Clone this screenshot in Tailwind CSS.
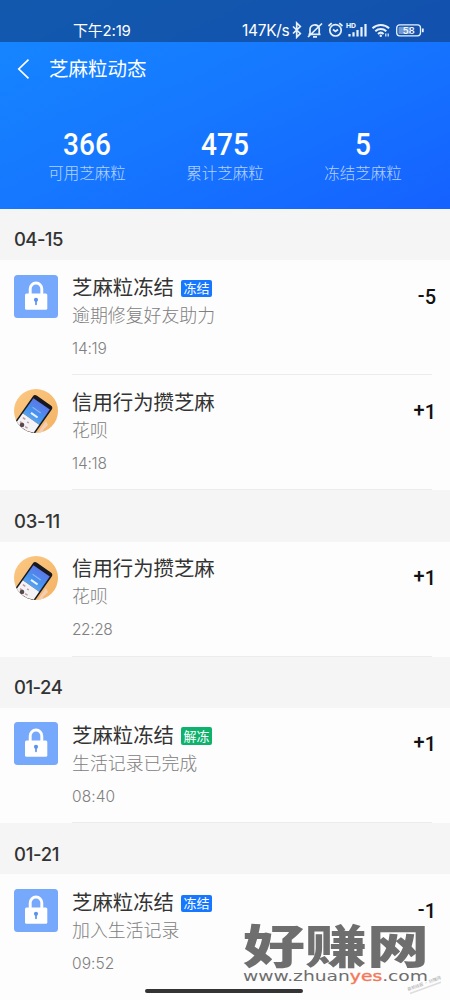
<!DOCTYPE html>
<html lang="zh-CN">
<head>
  <meta charset="UTF-8">
  <meta name="viewport" content="width=device-width, initial-scale=1">
  <title>芝麻粒动态</title>
  <script src="https://cdn.jsdelivr.net/npm/@tailwindcss/browser@4"></script>
</head>
<body class="bg-[#fdfdfd]">

  <!-- shared icons -->
  <svg class="absolute size-0">
    <symbol id="lock" viewBox="0 0 44 43">
      <rect width="44" height="43" rx="3.5" fill="#76a9fb"/>
      <path d="M16.2 20v-6.2a5.8 5.8 0 0 1 11.6 0V20" fill="none" stroke="#fff" stroke-width="2.9"/>
      <rect x="11" y="18.5" width="22.3" height="16.3" rx="1.5" fill="#fff"/>
      <circle cx="22" cy="24.8" r="2.1" fill="#5b93ee"/>
      <path d="M22 25v4.3" stroke="#5b93ee" stroke-width="1.7" stroke-linecap="round"/>
    </symbol>
    <linearGradient id="screen" x1="0" y1="0" x2="0" y2="1">
      <stop offset="0" stop-color="#5c78e8"/>
      <stop offset=".6" stop-color="#4792ee"/>
      <stop offset="1" stop-color="#5aa3f0"/>
    </linearGradient>
    <linearGradient id="peach" x1="0" y1="0" x2="1" y2="1">
      <stop offset="0" stop-color="#fbc884"/>
      <stop offset="1" stop-color="#f3b364"/>
    </linearGradient>
    <clipPath id="round"><circle cx="22" cy="22" r="22"/></clipPath>
    <symbol id="phone" viewBox="0 0 44 44">
      <g clip-path="url(#round)">
        <rect width="44" height="44" fill="url(#peach)"/>
        <path d="M32 32l-5 7-4 6h7l-1-4 5-5z" fill="#f3cdb5"/>
        <g transform="translate(20.5 5) rotate(35)">
          <rect width="23" height="44" rx="3" fill="#17191f"/>
          <rect x="1.5" y="4" width="20" height="18.500" fill="url(#screen)"/>
          <rect x="1.5" y="22.500" width="20" height="15" fill="#f4f3f6"/>
          <path d="M6 12h10" stroke="#8eb4fa" stroke-width="1"/>
          <path d="M8 17.500h8" stroke="#eaf4ff" stroke-width="2"/>
          <path d="M4 26h3M10 27h2M4 31h4M11 32h3" stroke="#c49aa0" stroke-width="1.5"/>
        </g>
        <circle cx="8" cy="36" r="2.3" fill="#55494e"/>
        <path d="M9 40l4 3 6 1" stroke="#5d4a48" stroke-width="1.5" fill="none"/>
      </g>
    </symbol>
  </svg>

  <main class="relative flex h-[1000px] w-[450px] flex-col overflow-hidden font-['Inter','Noto_Sans_CJK_SC',sans-serif] text-[#333]">

    <!-- header -->
    <header class="h-[209px] shrink-0 bg-linear-to-br from-[#1688ff] via-[#1677ff] to-[#1661ff] text-white">
      <div class="flex h-[42px] items-end justify-between bg-[#103a78]/60 pr-[25px] pb-[3px] pl-[73px]">
        <span class="text-[15px] leading-[16px] tracking-[-0.2px]">下午2:19</span>
        <div class="flex h-[18px] items-center">
          <span class="mt-[2px] w-[49px] text-[15.5px] leading-[18px] tracking-[-0.3px] whitespace-nowrap">147K/s</span>
          <svg class="h-[18px] w-[134px]" viewBox="0 0 134 18" fill="none" stroke="#e8f2ff" stroke-width="1.7">
            <!-- bluetooth -->
            <path d="M2 5.500l7.300 7-3.600 3.700V2l3.600 3.500-7.300 7"/>
            <!-- muted bell -->
            <path d="M17.500 13.300h12M19 13V8.500a4.700 4.700 0 0 1 9.200-1.200V13M22 15.900h4M17 16L31 2.500"/>
            <!-- alarm -->
            <circle cx="44.500" cy="9.300" r="5.700"/>
            <path d="M42 8.500l2.500 2 2.500-2M37.500 5l3.200-2.900M51.500 5l-3.200-2.900"/>
            <!-- signal -->
            <path d="M58.500 13v2.500M62.500 11.300v4.200M66.500 9v6.500M70.500 6v9.500M74.500 3v12.500" stroke-width="2.2"/>
            <text x="55" y="7" font-size="6.800" font-weight="800" fill="#e8f2ff" stroke="none">HD</text>
            <!-- wifi -->
            <path d="M81.500 7.300a12 12 0 0 1 16.600 0M84.300 10.200a8 8 0 0 1 11 0M87 12.900a4.200 4.200 0 0 1 5.600 0" stroke-width="2"/>
            <circle cx="89.800" cy="14.700" r="1.200" fill="#e8f2ff" stroke="none"/>
            <path d="M94.800 12.500v3M97.200 12.500v3" stroke-width="1.200"/>
            <!-- battery -->
            <rect x="105.700" y="3.900" width="23.800" height="10.900" rx="3" stroke-width="1.300"/>
            <rect x="107.500" y="5.800" width="12" height="7.200" rx="1" fill="#6f98d2" stroke="none"/>
            <path d="M131.800 7.500v3.700" stroke-width="1.800"/>
            <text x="111.800" y="12.700" font-size="9.300" font-weight="600" fill="#f4f8ff" stroke="none">58</text>
          </svg>
        </div>
      </div>

      <div class="flex h-[54px] items-center pl-[17px]">
        <svg class="h-[22px] w-[32px]" viewBox="0 0 32 22" fill="none" stroke="#fff" stroke-width="1.7">
          <path d="M11.500 1.700L1.800 11l9.700 9.300"/>
        </svg>
        <h1 class="text-[19.5px] leading-[22px]">芝麻粒动态</h1>
      </div>

      <div class="grid grid-cols-3 px-[18px] pt-[32px] text-center">
        <div>
          <div class="scale-x-92 font-['Roboto'] text-[30.5px] leading-[33px] font-medium">366</div>
          <div class="text-[15.5px] leading-[26px] font-light text-white/70">可用芝麻粒</div>
        </div>
        <div>
          <div class="scale-x-92 font-['Roboto'] text-[30.5px] leading-[33px] font-medium">475</div>
          <div class="text-[15.5px] leading-[26px] font-light text-white/70">累计芝麻粒</div>
        </div>
        <div>
          <div class="scale-x-92 font-['Roboto'] text-[30.5px] leading-[33px] font-medium">5</div>
          <div class="text-[15.5px] leading-[26px] font-light text-white/70">冻结芝麻粒</div>
        </div>
      </div>
    </header>

    <!-- 04-15 -->
    <h2 class="flex h-[51.3px] shrink-0 items-center bg-[#f5f5f5] pt-[11px] pl-[14px] text-[18.5px] font-medium tracking-[-0.6px]">04-15</h2>
    <article class="flex h-[115px] shrink-0 pl-[14px]">
      <svg class="mt-[14.5px] h-[43px] w-[44px]"><use href="#lock"/></svg>
      <div class="mr-[18px] ml-[14px] flex-1 border-b border-[#ececec] pt-[14px]">
        <div class="flex h-[28px] items-center gap-[7px]">
          <h3 class="text-[20.4px] leading-[28px]">芝麻粒冻结</h3>
          <span class="mt-[1px] h-[17px] w-[31px] rounded-[2px] bg-[#1677ff] text-center text-[13px] leading-[17px] text-white">冻结</span>
        </div>
        <p class="text-[17.9px] leading-[27px] font-light text-[#808080]">逾期修复好友助力</p>
        <time class="mt-[10px] block text-[15.5px] leading-[20px] font-light tracking-[-0.2px] text-[#808080]">14:19</time>
      </div>
      <span class="absolute right-[14px] mt-[25px] font-['Roboto'] text-[20px] leading-[24px] font-medium text-[#111]"><span class="relative -top-0.5">-</span>5</span>
    </article>
    <article class="flex h-[115px] shrink-0 pl-[14px]">
      <svg class="mt-[14px] h-[44px] w-[44px]"><use href="#phone"/></svg>
      <div class="mr-[18px] ml-[14px] flex-1 border-b border-[#ececec] pt-[14px]">
        <h3 class="text-[20.4px] leading-[28px]">信用行为攒芝麻</h3>
        <p class="text-[17.9px] leading-[27px] font-light text-[#808080]">花呗</p>
        <time class="mt-[10px] block text-[15.5px] leading-[20px] font-light tracking-[-0.2px] text-[#808080]">14:18</time>
      </div>
      <span class="absolute right-[14px] mt-[25px] font-['Roboto'] text-[20px] leading-[24px] font-medium text-[#111]"><span class="relative -top-0.5">+</span>1</span>
    </article>

    <!-- 03-11 -->
    <h2 class="flex h-[51.3px] shrink-0 items-center bg-[#f5f5f5] pt-[11px] pl-[14px] text-[18.5px] font-medium tracking-[-0.3px]">03-11</h2>
    <article class="flex h-[115px] shrink-0 pl-[14px]">
      <svg class="mt-[14px] h-[44px] w-[44px]"><use href="#phone"/></svg>
      <div class="mr-[18px] ml-[14px] flex-1 border-b border-[#ececec] pt-[13px]">
        <h3 class="text-[20.4px] leading-[28px]">信用行为攒芝麻</h3>
        <p class="text-[17.9px] leading-[27px] font-light text-[#808080]">花呗</p>
        <time class="mt-[10px] block text-[15.5px] leading-[20px] font-light tracking-[-0.4px] text-[#808080]">22:28</time>
      </div>
      <span class="absolute right-[14px] mt-[24px] font-['Roboto'] text-[20px] leading-[24px] font-medium text-[#111]"><span class="relative -top-0.5">+</span>1</span>
    </article>

    <!-- 01-24 -->
    <h2 class="flex h-[51.3px] shrink-0 items-center bg-[#f5f5f5] pt-[11px] pl-[14px] text-[18.5px] font-medium tracking-[-0.5px]">01-24</h2>
    <article class="flex h-[115px] shrink-0 pl-[14px]">
      <svg class="mt-[14.5px] h-[43px] w-[44px]"><use href="#lock"/></svg>
      <div class="mr-[18px] ml-[14px] flex-1 border-b border-[#ececec] pt-[14px]">
        <div class="flex h-[28px] items-center gap-[7px]">
          <h3 class="text-[20.4px] leading-[28px]">芝麻粒冻结</h3>
          <span class="mt-[1px] h-[18px] w-[31px] rounded-[2px] bg-[#0fb26d] text-center text-[13px] leading-[18px] text-white">解冻</span>
        </div>
        <p class="text-[17.9px] leading-[27px] font-light text-[#808080]">生活记录已完成</p>
        <time class="mt-[10px] block text-[15.5px] leading-[20px] font-light tracking-[0.1px] text-[#808080]">08:40</time>
      </div>
      <span class="absolute right-[14px] mt-[24px] font-['Roboto'] text-[20px] leading-[24px] font-medium text-[#111]"><span class="relative -top-0.5">+</span>1</span>
    </article>

    <!-- 01-21 -->
    <h2 class="flex h-[51.3px] shrink-0 items-center bg-[#f5f5f5] pt-[12px] pl-[14px] text-[18.5px] font-medium tracking-[-0.3px]">01-21</h2>
    <article class="flex h-[126px] shrink-0 pl-[14px]">
      <svg class="mt-[14.5px] h-[43px] w-[44px]"><use href="#lock"/></svg>
      <div class="mr-[18px] ml-[14px] flex-1 pt-[15px]">
        <div class="flex h-[28px] items-center gap-[7px]">
          <h3 class="text-[20.4px] leading-[28px]">芝麻粒冻结</h3>
          <span class="mt-[1px] h-[17px] w-[31px] rounded-[2px] bg-[#1677ff] text-center text-[13px] leading-[17px] text-white">冻结</span>
        </div>
        <p class="text-[17.9px] leading-[27px] font-light text-[#808080]">加入生活记录</p>
        <time class="mt-[10px] block text-[15.5px] leading-[20px] font-light tracking-[0.1px] text-[#808080]">09:52</time>
      </div>
      <span class="absolute right-[14px] mt-[25px] font-['Roboto'] text-[20px] leading-[24px] font-medium text-[#111]"><span class="relative -top-0.5">-</span>1</span>
    </article>

    <!-- home indicator -->
    <div class="absolute bottom-[7.5px] left-[145px] h-[3.5px] w-[158px] rounded-full bg-[#333]"></div>

    <!-- watermark -->
    <svg class="absolute top-[900px] left-[235px] h-[100px] w-[215px]" viewBox="0 0 215 100">
      <text x="8" y="62.5" font-family="Noto Sans CJK SC" font-size="46" font-weight="900" fill="#6e6e6e" textLength="186" lengthAdjust="spacingAndGlyphs">好赚网</text>
      <text x="8" y="81" font-family="DejaVu Sans" font-size="14.5" fill="#6e6e6e" textLength="185" lengthAdjust="spacingAndGlyphs">www.zhuan<tspan fill="#f47858" stroke="#f47858" stroke-width=".4">yes</tspan>.com</text>
      <g transform="translate(173 91) rotate(-20)" fill="#aaa" font-family="Noto Sans CJK SC">
        <text font-size="4.2">最新线报 · 好赚网</text>
        <path d="M1 3h33" stroke="#ddd" stroke-width="1.5"/>
      </g>
    </svg>
  </main>

</body>
</html>
